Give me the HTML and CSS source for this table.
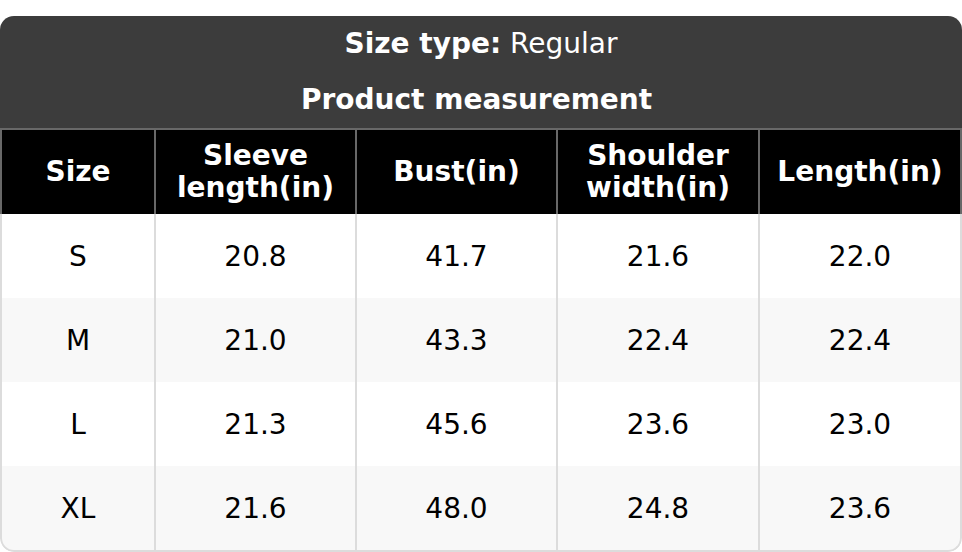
FILE: index.html
```html
<!DOCTYPE html>
<html>
<head>
<meta charset="utf-8">
<link rel="stylesheet" href="styles.css">
</head>
<body>
<div class="card">
  <div class="title">
    <div class="title-line"><b>Size type:</b> Regular</div>
    <div class="title-line"><b>Product measurement</b>&nbsp;</div>
  </div>
  <table class="sizes">
    <colgroup>
      <col class="c1"><col class="c2"><col class="c3"><col class="c4"><col class="c5">
    </colgroup>
    <thead>
      <tr>
        <th>Size</th>
        <th>Sleeve<br>length(in)</th>
        <th>Bust(in)</th>
        <th>Shoulder<br>width(in)</th>
        <th>Length(in)</th>
      </tr>
    </thead>
    <tbody>
      <tr><td>S</td><td>20.8</td><td>41.7</td><td>21.6</td><td>22.0</td></tr>
      <tr><td>M</td><td>21.0</td><td>43.3</td><td>22.4</td><td>22.4</td></tr>
      <tr><td>L</td><td>21.3</td><td>45.6</td><td>23.6</td><td>23.0</td></tr>
      <tr><td>XL</td><td>21.6</td><td>48.0</td><td>24.8</td><td>23.6</td></tr>
    </tbody>
  </table>
</div>
</body>
</html>
```
FILE: styles.css
```css
html, body {
  margin: 0;
  padding: 0;
  background: #fff;
}
body {
  padding-top: 16px;
  font-family: "DejaVu Sans", sans-serif;
}
.card {
  width: 962px;
  border-radius: 14px;
  overflow: hidden;
  background: #fff;
}
.title {
  background: #3c3c3c;
  color: #fff;
  text-align: center;
  font-size: 28px;
}
.title-line {
  height: 56px;
  line-height: 56px;
}
.title-line b { font-weight: bold; }
.sizes {
  width: 962px;
  table-layout: fixed;
  border-collapse: separate;
  border-spacing: 0;
  font-size: 28px;
}
.c1 { width: 156px; }
.c2 { width: 201px; }
.c3 { width: 201px; }
.c4 { width: 202px; }
.c5 { width: 202px; }
.sizes th, .sizes td {
  box-sizing: border-box;
  text-align: center;
  padding: 0;
  border-right: 2px solid #dcdcdc;
}
.sizes th:first-child, .sizes td:first-child {
  border-left: 2px solid #dcdcdc;
}
.sizes th {
  background: #000;
  color: #fff;
  font-weight: bold;
  height: 86px;
  line-height: 32px;
  border-top: 2px solid #686868;
  border-right-color: #686868;
}
.sizes th:first-child { border-left-color: #686868; }
.sizes td {
  height: 84px;
  color: #000;
}
.sizes tbody tr:nth-child(even) td { background: #f8f8f8; }
.sizes tbody tr:last-child td { border-bottom: 2px solid #dcdcdc; height: 86px; }
.sizes tbody tr:last-child td:first-child { border-bottom-left-radius: 14px; }
.sizes tbody tr:last-child td:last-child { border-bottom-right-radius: 14px; }
```
